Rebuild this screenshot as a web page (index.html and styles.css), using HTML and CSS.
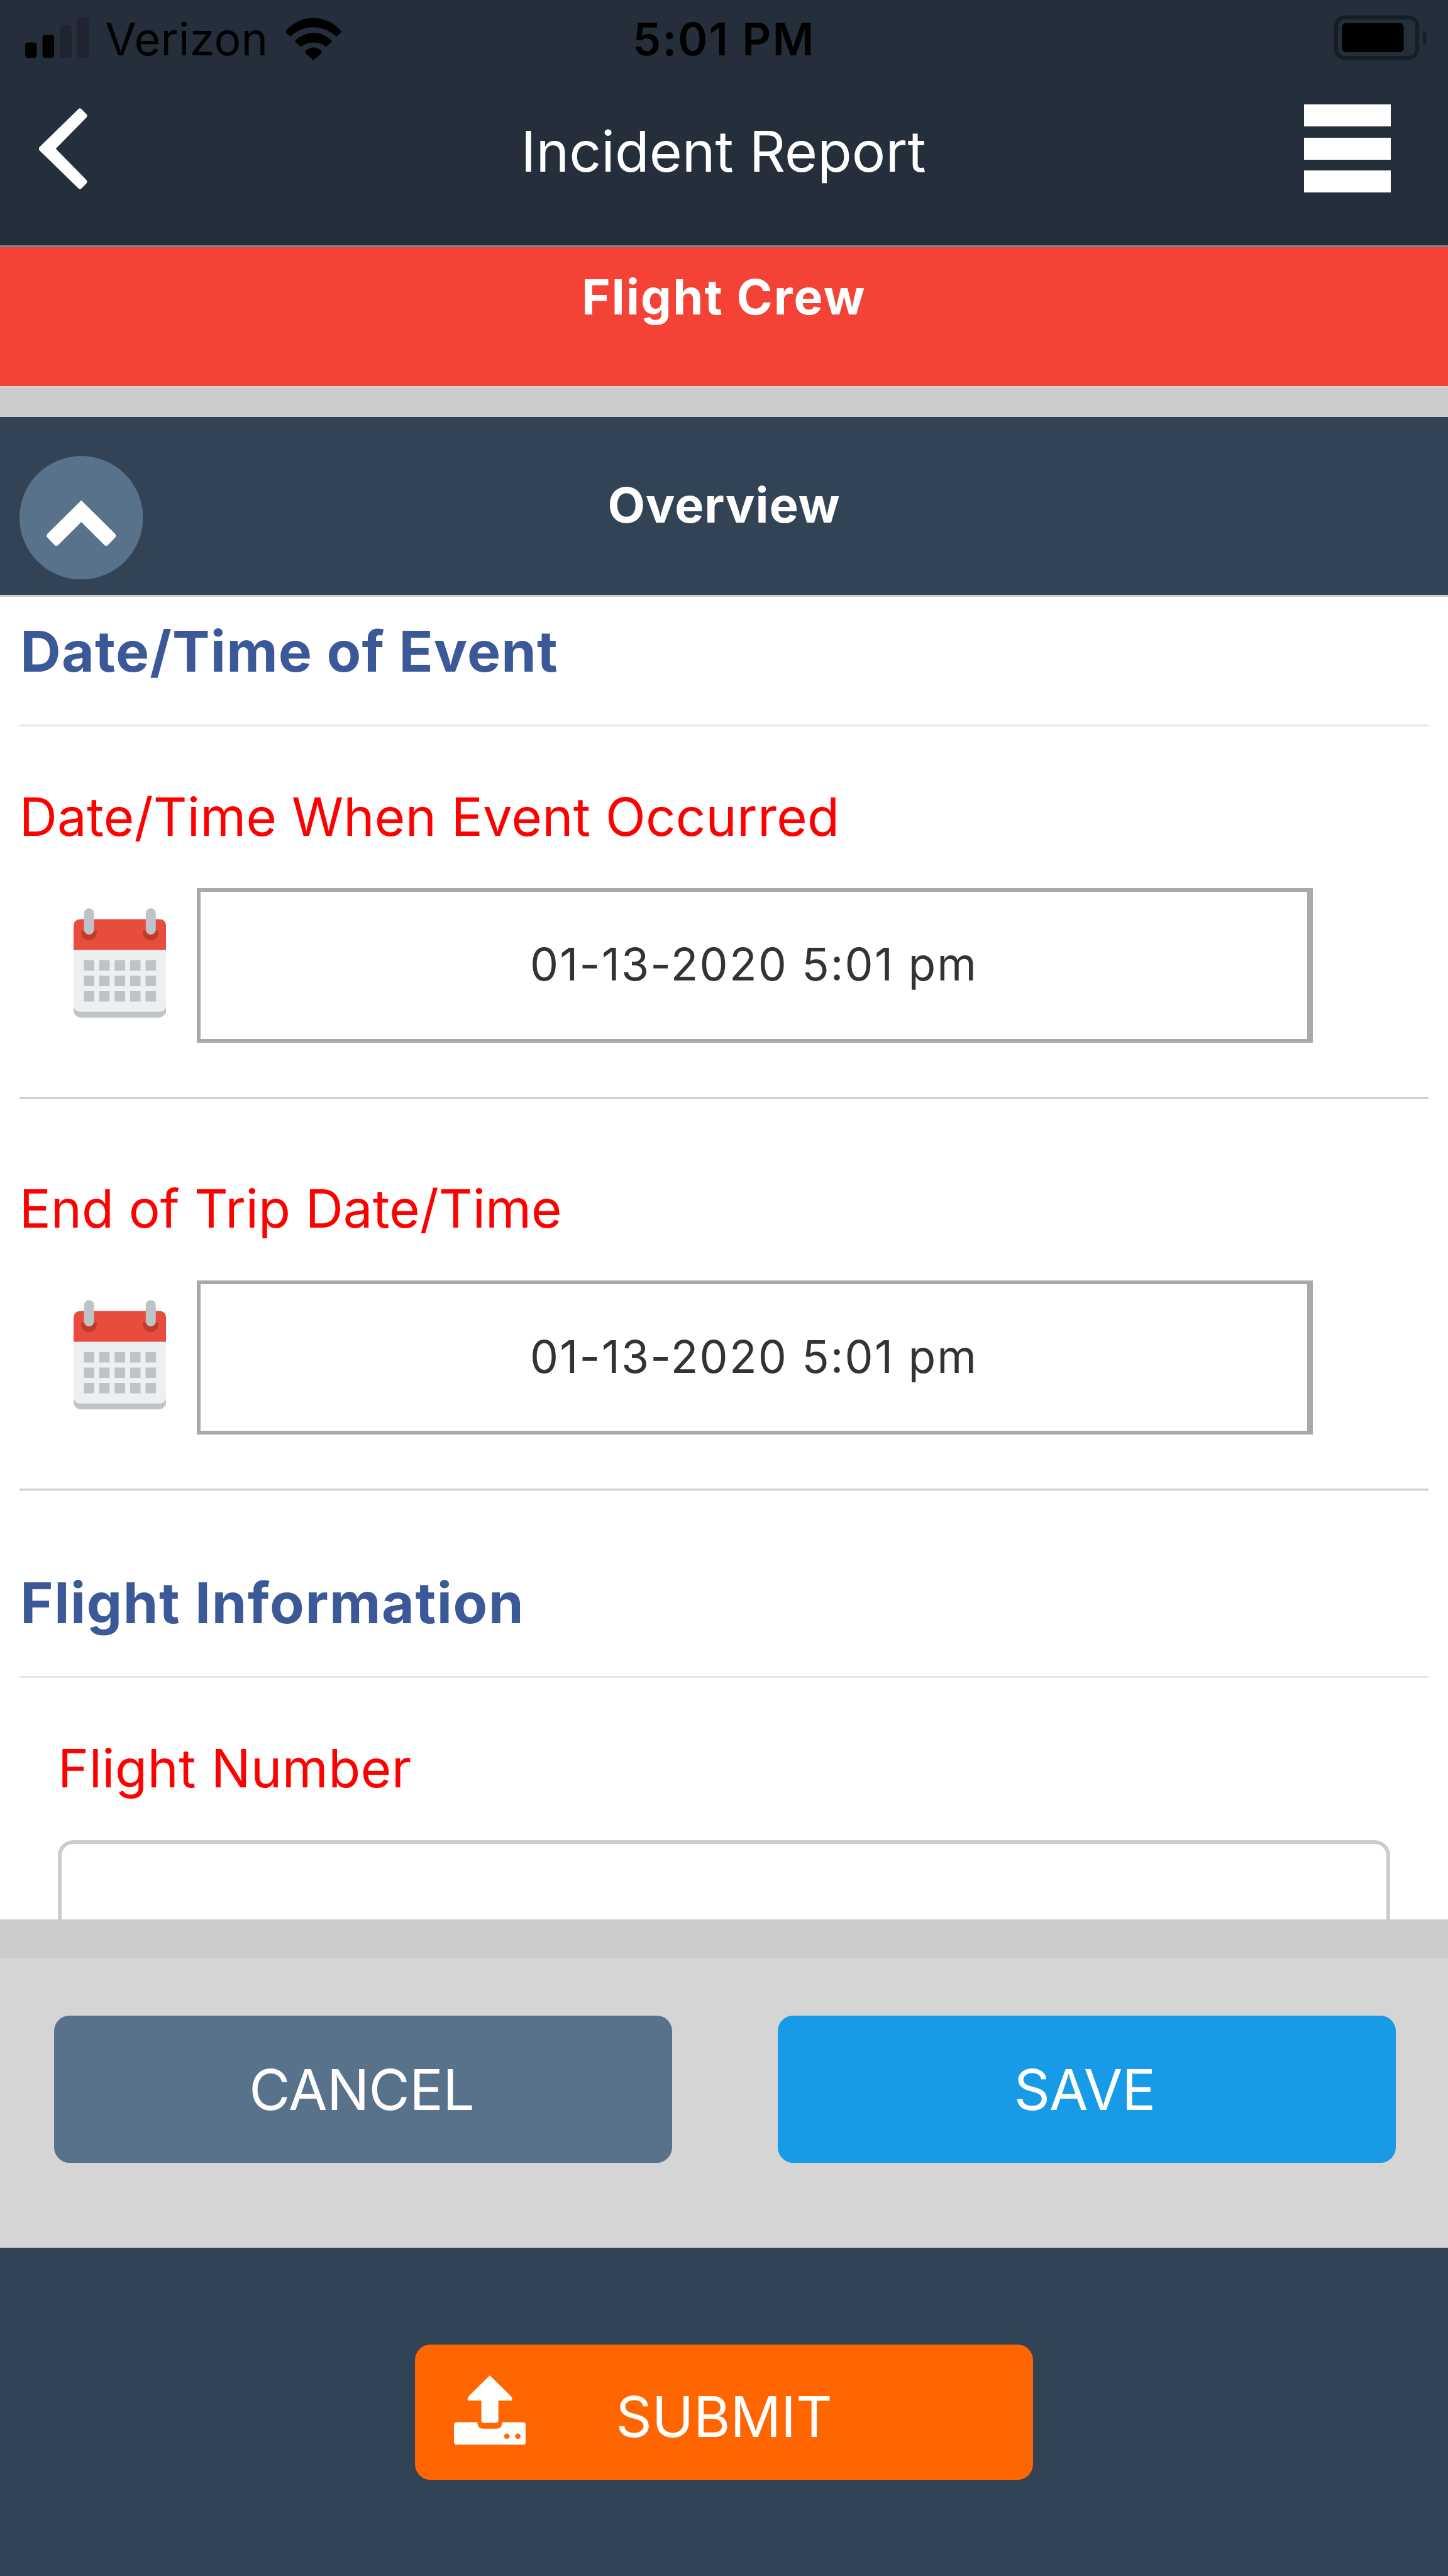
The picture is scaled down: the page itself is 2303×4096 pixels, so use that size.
FILE: index.html
```
<!DOCTYPE html>
<html lang="en">
<head>
<meta charset="utf-8">
<title>Incident Report</title>
<link rel="stylesheet" href="styles.css">
</head>
<body>
<div class="screen">
  <header class="header">
    <div class="status">
      <div class="status-left">
        <svg class="signal" viewBox="13 0 33 40" aria-hidden="true">
          <rect x="13" y="22" width="6" height="8" rx="1.4"/>
          <rect x="22" y="18" width="6" height="12" rx="1.4"/>
          <rect class="dim" x="31" y="13" width="6" height="17" rx="1.4"/>
          <rect class="dim" x="40" y="9" width="6" height="21" rx="1.4"/>
        </svg>
        <span class="carrier">Verizon</span>
        <svg class="wifi" viewBox="148 0 29 40" aria-hidden="true">
          <path d="M148.4 17Q147.8 16.4 148.4 15.8A18.6 18.6 0 0 1 176.6 15.8Q177.2 16.4 176.6 17L174.4 19A16.9 16.9 0 0 0 150.6 19Z"/>
          <path d="M153.3 21.9Q152.7 21.3 153.3 20.8A13 13 0 0 1 171.7 20.8Q172.3 21.3 171.7 21.9L169 24.2A10.6 10.6 0 0 0 156 24.2Z"/>
          <path d="M158.4 27.6Q157.9 26.9 158.5 26.3A5.6 5.6 0 0 1 166.5 26.3Q167.1 26.9 166.6 27.6L162.5 31.2Z"/>
        </svg>
      </div>
      <span class="time">5:01 PM</span>
      <svg class="battery" viewBox="691 0 48 40" aria-hidden="true">
        <rect class="shell" x="692" y="9" width="42" height="21" rx="4.4"/>
        <rect x="695" y="12" width="32" height="15" rx="2"/>
        <path class="nub" d="M737 15.4Q739 16.8 739 19.6Q739 22.4 737 23.8Z"/>
      </svg>
    </div>
    <div class="navbar">
      <svg class="back" viewBox="20 56 25 42" aria-hidden="true">
        <path d="M20.2 76.2 40.4 56.5Q41.2 55.7 42 56.5L44.6 59.1Q45.3 60 44.6 60.8L28.7 77 44.6 93.2Q45.3 94 44.6 94.9L42 97.5Q41.2 98.3 40.4 97.5L20.2 77.8Q19.6 77 20.2 76.2Z"/>
      </svg>
      <h1 class="title">Incident Report</h1>
      <div class="menu"><i></i><i></i><i></i></div>
    </div>
  </header>

  <div class="banner">Flight Crew</div>

  <div class="section-bar">
    <svg class="collapse" viewBox="10 236 64 64" aria-hidden="true">
      <circle cx="42" cy="268" r="32"/>
      <path d="M42 259 59.6 276.4Q60.3 277.3 59.6 278.2L55.8 282.2Q54.9 283 54 282.2L42 270.2 30 282.2Q29.1 283 28.2 282.2L24.4 278.2Q23.7 277.3 24.4 276.4Z"/>
    </svg>
    <h2 class="section-title">Overview</h2>
  </div>

  <main class="content">
    <h3 class="group-title">Date/Time of Event</h3>
    <section class="field">
      <label class="label">Date/Time When Event Occurred</label>
      <div class="date-row">
        <svg class="calendar" viewBox="38 470 48 57" aria-hidden="true">
          <rect class="cal-edge" x="38" y="500" width="48" height="27" rx="4"/>
          <path class="cal-page" d="M38 490H86V520Q86 524 82 524H42Q38 524 38 520Z"/>
          <path class="cal-top" d="M38 492V480Q38 476 42 476H82Q86 476 86 480V492Z"/>
          <path class="cal-shade" d="M42 482V483A4 4 0 0 0 50 483V482ZM74 482V483A4 4 0 0 0 82 483V482Z"/>
          <rect class="cal-mark" x="43.4" y="470.4" width="5.2" height="13.6" rx="2.6"/>
          <rect class="cal-mark" x="75.4" y="470.4" width="5.2" height="13.6" rx="2.6"/>
          <path class="cal-mark" d="M43.3 497.3h5.4v5.4h-5.4zm8 0h5.4v5.4h-5.4zm8 0h5.4v5.4h-5.4zm8 0h5.4v5.4h-5.4zm8 0h5.4v5.4h-5.4zM43.3 505.3h5.4v5.4h-5.4zm8 0h5.4v5.4h-5.4zm8 0h5.4v5.4h-5.4zm8 0h5.4v5.4h-5.4zm8 0h5.4v5.4h-5.4zM43.3 513.3h5.4v5.4h-5.4zm8 0h5.4v5.4h-5.4zm8 0h5.4v5.4h-5.4zm8 0h5.4v5.4h-5.4zm8 0h5.4v5.4h-5.4z"/>
        </svg>
        <div class="date-box">01-13-2020 5:01 pm</div>
      </div>
    </section>
    <section class="field field-next">
      <label class="label">End of Trip Date/Time</label>
      <div class="date-row">
        <svg class="calendar" viewBox="38 470 48 57" aria-hidden="true">
          <rect class="cal-edge" x="38" y="500" width="48" height="27" rx="4"/>
          <path class="cal-page" d="M38 490H86V520Q86 524 82 524H42Q38 524 38 520Z"/>
          <path class="cal-top" d="M38 492V480Q38 476 42 476H82Q86 476 86 480V492Z"/>
          <path class="cal-shade" d="M42 482V483A4 4 0 0 0 50 483V482ZM74 482V483A4 4 0 0 0 82 483V482Z"/>
          <rect class="cal-mark" x="43.4" y="470.4" width="5.2" height="13.6" rx="2.6"/>
          <rect class="cal-mark" x="75.4" y="470.4" width="5.2" height="13.6" rx="2.6"/>
          <path class="cal-mark" d="M43.3 497.3h5.4v5.4h-5.4zm8 0h5.4v5.4h-5.4zm8 0h5.4v5.4h-5.4zm8 0h5.4v5.4h-5.4zm8 0h5.4v5.4h-5.4zM43.3 505.3h5.4v5.4h-5.4zm8 0h5.4v5.4h-5.4zm8 0h5.4v5.4h-5.4zm8 0h5.4v5.4h-5.4zm8 0h5.4v5.4h-5.4zM43.3 513.3h5.4v5.4h-5.4zm8 0h5.4v5.4h-5.4zm8 0h5.4v5.4h-5.4zm8 0h5.4v5.4h-5.4zm8 0h5.4v5.4h-5.4z"/>
        </svg>
        <div class="date-box">01-13-2020 5:01 pm</div>
      </div>
    </section>
    <h3 class="group-title group-next">Flight Information</h3>
    <section class="text-field">
      <label class="label label-number">Flight Number</label>
      <div class="text-input"></div>
    </section>
  </main>

  <div class="actions">
    <button class="btn btn-cancel">CANCEL</button>
    <button class="btn btn-save">SAVE</button>
  </div>

  <footer class="footer">
    <button class="btn btn-submit">
      <svg class="upload" viewBox="235 1230 37.2 36" aria-hidden="true">
        <path d="M253.6 1230 264.6 1240.8Q265.4 1241.8 265 1243H258V1253.4Q258 1254.6 256.8 1254.6H250.4Q249.2 1254.6 249.2 1253.4V1243H242.2Q241.8 1241.8 242.6 1240.8Z"/>
        <path d="M236.5 1254.3H247.2V1255Q247.6 1257.6 250.2 1257.6H257Q259.6 1257.6 260 1255V1254.3H270.7Q272.2 1254.3 272.2 1255.8V1264.4Q272.2 1266 270.7 1266H236.5Q235 1266 235 1264.4V1255.8Q235 1254.3 236.5 1254.3Z"/>
        <circle class="led" cx="262.4" cy="1261.5" r="1.4"/>
        <circle class="led" cx="268.1" cy="1261.5" r="1.4"/>
      </svg>
      <span class="submit-text">SUBMIT</span>
    </button>
  </footer>
</div>
</body>
</html>
```

FILE: styles.css
```
/* 1rem = 10 units of the 750-unit-wide layout */
html { font-size: 30.7067px; }

*, *::before, *::after { box-sizing: border-box; }

body {
  margin: 0;
  font-family: Inter, "Liberation Sans", sans-serif;
  background: #fff;
}

h1, h2, h3 { margin: 0; }
svg { display: block; flex: none; }

.screen {
  display: flex;
  flex-direction: column;
  width: 2303px;
  height: 4096px;
  overflow: hidden;
}

/* Header */
.header {
  flex: none;
  height: 12.8rem;
  background: #242f3b;
  border-bottom: .1rem solid #828488;
}

.status {
  display: grid;
  grid-template-columns: 1fr auto 1fr;
  height: 4rem;
  padding: 0 1.1rem 0 1.3rem;
  color: #000;
  font-size: 2.33rem;
  line-height: 4.1rem;
  white-space: nowrap;
}

.status-left { display: flex; }
.signal { width: 3.3rem; height: 4rem; }
.signal .dim { fill: #1f2430; }
.carrier { width: 9.35rem; margin-left: .85rem; letter-spacing: .0125rem; }
.wifi { width: 2.9rem; height: 4rem; }
.time { padding-right: .2rem; font-weight: 600; letter-spacing: .07rem; }
.battery { width: 4.8rem; height: 4rem; justify-self: end; }
.battery .shell { fill: none; stroke: #161e25; stroke-width: 2; }
.battery .nub { fill: #161e25; }

.navbar {
  display: grid;
  grid-template-columns: 1fr auto 1fr;
  padding: 0 2.95rem 0 2.03rem;
}

.back { width: 2.5rem; height: 4.2rem; margin-top: 1.6rem; fill: #fff; }

.title {
  padding-left: .86rem;
  color: #fff;
  font-size: 2.91rem;
  font-weight: 400;
  line-height: 7.68rem;
}

.menu {
  display: flex;
  flex-direction: column;
  justify-self: end;
  gap: .56rem;
  width: 4.51rem;
  margin-top: 1.41rem;
}

.menu i { height: 1.15rem; background: #fff; }

/* Banner */
.banner {
  flex: none;
  height: 7.3rem;
  background: #f44336;
  border-bottom: .1rem solid #d4d4d4;
  color: #fff;
  font-size: 2.52rem;
  font-weight: 700;
  letter-spacing: .07rem;
  line-height: 5.16rem;
  text-align: center;
}

/* Collapsible section bar */
.section-bar {
  display: grid;
  grid-template-columns: 6.4rem 1fr 6.4rem;
  flex: none;
  height: 10.8rem;
  padding: 0 1rem;
  background: #324355;
  border-top: 1.5rem solid #ccc;
  border-bottom: .1rem solid #d0d0d0;
}

.collapse { width: 6.4rem; height: 6.4rem; margin-top: 2rem; fill: #fff; }
.collapse circle { fill: #59728c; }

.section-title {
  color: #fff;
  font-size: 2.52rem;
  font-weight: 700;
  letter-spacing: .035rem;
  line-height: 9.16rem;
  text-align: center;
}

/* Form */
.content {
  flex: none;
  height: 68.5rem;
  padding: 0 1rem;
  overflow: hidden;
  background: #fff;
}

.group-title {
  height: 6.7rem;
  padding-left: .05rem;
  border-bottom: .1rem solid #e5e5e5;
  color: #3b5998;
  font-size: 2.91rem;
  font-weight: 700;
  letter-spacing: .037rem;
  line-height: 5.68rem;
}

.group-next { height: 9.7rem; padding-top: 3rem; letter-spacing: .051rem; }

.field { border-bottom: .1rem solid #ccc; padding-bottom: 2.8rem; }
.field-next { padding-top: 1rem; }

.label {
  display: block;
  height: 8.4rem;
  padding-top: 1.7rem;
  color: #f00;
  font-size: 2.715rem;
  letter-spacing: .007rem;
  line-height: 6.02rem;
}

.field-next .label { letter-spacing: .001rem; }
.text-field .label-number { letter-spacing: .014rem; }

.date-row { display: flex; padding-left: 2.8rem; }
.calendar { width: 4.8rem; height: 5.7rem; margin: 1rem 1.6rem 0 0; }
.cal-edge, .cal-mark { fill: #bdc3c7; }
.cal-page { fill: #ecf0f1; }
.cal-top { fill: #e84c3d; }
.cal-shade { fill: #c0392b; }

.date-box {
  width: 57.8rem;
  height: 8rem;
  border: .2rem solid #a9a9a9;
  border-right-width: .3rem;
  color: #333;
  font-size: 2.33rem;
  letter-spacing: .07rem;
  line-height: 7.5rem;
  text-align: center;
}

.text-field { padding: 0 2rem; }
.text-input { height: 8rem; border: .2rem solid #ccc; border-radius: .8rem; }

/* Buttons */
.btn {
  margin: 0;
  padding: 0;
  border: 0;
  border-radius: .8rem;
  color: #fff;
  font-family: inherit;
  font-size: 2.91rem;
  text-align: center;
}

.actions {
  display: flex;
  flex: none;
  justify-content: space-between;
  height: 17rem;
  padding: 3rem 2.7rem 0 2.8rem;
  background: #d5d5d5;
  border-top: 2rem solid #ccc;
}

.actions .btn { width: 32rem; height: 7.6rem; line-height: 7.68rem; }
.actions .btn-cancel { padding-right: .14rem; background: #59728c; letter-spacing: -.023rem; }
.actions .btn-save { padding-right: .25rem; background: #179be6; letter-spacing: -.03rem; }

.footer {
  display: flex;
  flex: 1;
  justify-content: center;
  align-items: flex-start;
  padding-top: 5rem;
  background: #324355;
}

.btn-submit {
  display: grid;
  grid-template-columns: 1fr auto 1fr;
  width: 32rem;
  height: 7rem;
  padding: 0 2rem;
  background: #f60;
}

.upload { width: 3.72rem; height: 3.6rem; margin-top: 1.6rem; fill: #fff; }
.upload .led { fill: #f60; }
.submit-text { line-height: 7.48rem; letter-spacing: -.003rem; }
```
